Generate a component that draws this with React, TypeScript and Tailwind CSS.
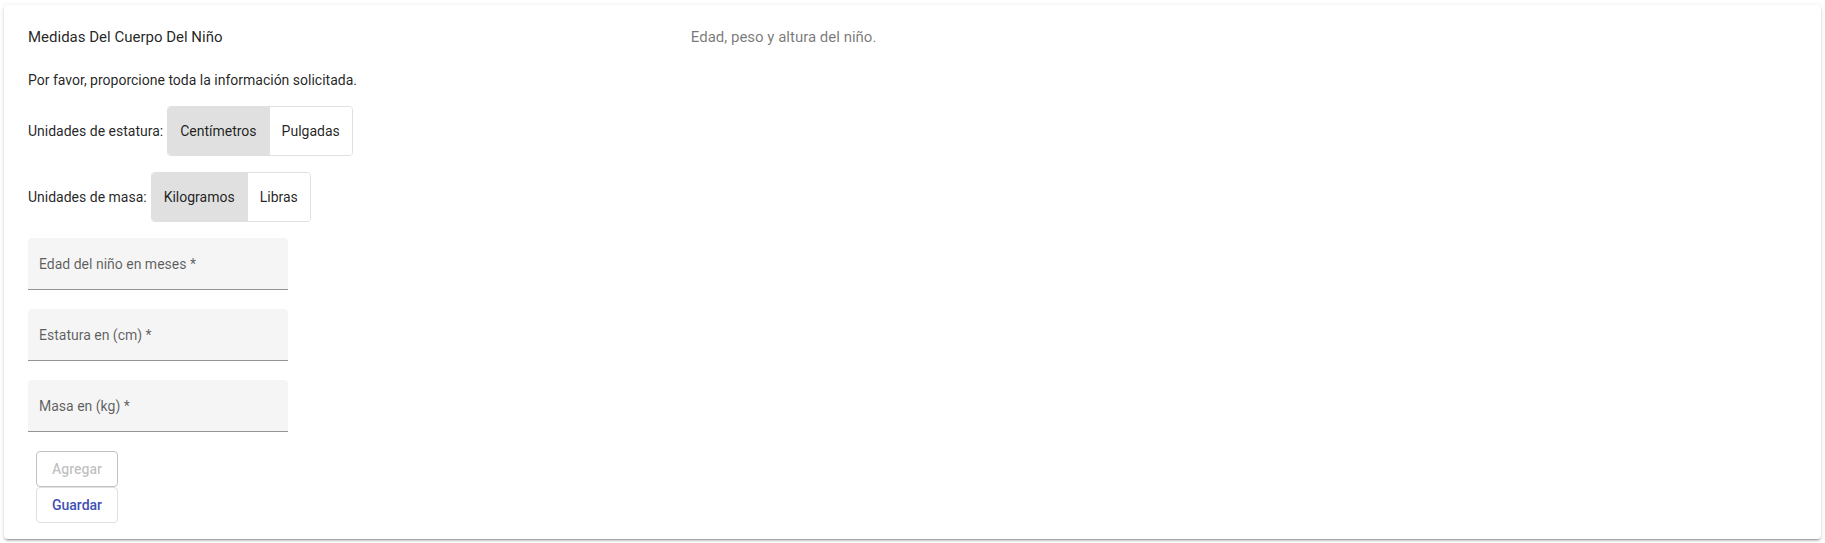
import React from "react";

function ToggleGroup({ options, selected }: { options: string[]; selected: number }) {
  return (
    <div className="ml-1 flex h-[50px] overflow-hidden rounded-[4px] border border-[#e0e0e0]">
      {options.map((o, i) => (
        <div
          key={o}
          className={
            i === selected
              ? "flex items-center bg-[#e0e0e0] px-3 text-[14px] text-[#000000de]"
              : "flex items-center border-l border-[#e0e0e0] bg-white px-3 text-[14px] text-[#000000de]"
          }
        >
          {o}
        </div>
      ))}
    </div>
  );
}

function Field({ label }: { label: string }) {
  return (
    <div className="mb-[19px] flex h-[52px] w-[260px] items-center rounded-t-[4px] border-b border-[#949494] bg-[#f5f5f5] pl-[11px] pt-[1px] text-[14px] text-[#000000a0]">
      {label}
    </div>
  );
}

export default function App() {
  return (
    <div className="bg-white px-[4px] pb-[4px] pt-[5px] font-['Roboto',sans-serif]">
      <div className="rounded-[4px] bg-white shadow-[0_3px_1px_-2px_rgba(0,0,0,0.2),0_2px_2px_0_rgba(0,0,0,0.14),0_1px_5px_0_rgba(0,0,0,0.12)]">
        <div className="flex h-16 items-center px-6 text-[15px]">
          <div className="mr-4 grow text-[#000000de]">Medidas Del Cuerpo Del Niño</div>
          <div className="mr-4 grow-[2] text-[#0000008a]">Edad, peso y altura del niño.</div>
        </div>
        <div className="px-6 pb-4">
          <p className="mt-[1px] text-[14px] leading-5 text-[#000000de]">
            Por favor, proporcione toda la información solicitada.
          </p>
          <div className="mt-4 flex items-center text-[14px] text-[#000000de]">
            <span>Unidades de estatura:</span>
            <ToggleGroup options={["Centímetros", "Pulgadas"]} selected={0} />
          </div>
          <div className="mt-4 flex items-center text-[14px] text-[#000000de]">
            <span>Unidades de masa:</span>
            <ToggleGroup options={["Kilogramos", "Libras"]} selected={0} />
          </div>
          <div className="mt-4 flex flex-col">
            <Field label="Edad del niño en meses *" />
            <Field label="Estatura en (cm) *" />
            <Field label="Masa en (kg) *" />
          </div>
          <div className="flex flex-col items-start pl-2">
            <button className="h-9 rounded-[4px] border border-[#c2c2c2] bg-white px-[15px] text-[14px] font-medium text-[#00000042]">
              Agregar
            </button>
            <button className="h-9 rounded-[4px] border border-[#e0e0e0] bg-white px-[15px] text-[14px] font-medium text-[#3f51b5]">
              Guardar
            </button>
          </div>
        </div>
      </div>
    </div>
  );
}
